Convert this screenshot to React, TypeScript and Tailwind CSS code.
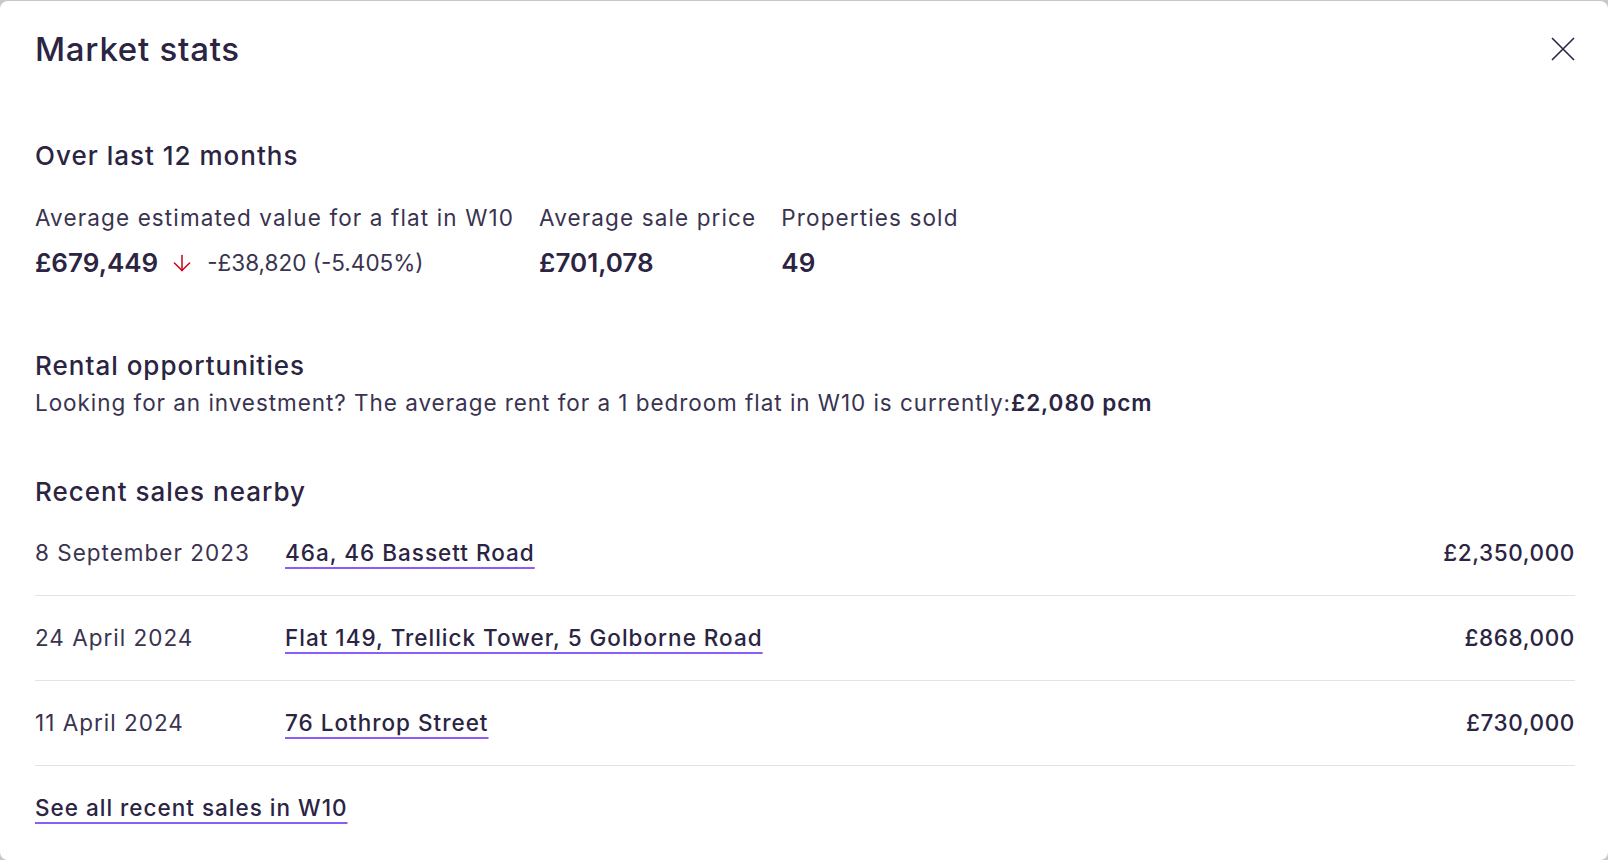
import React from "react";
import { ArrowDown } from "lucide-react";

interface Sale {
  date: string;
  address: string;
  price: string;
}

const sales: Sale[] = [
  { date: "8 September 2023", address: "46a, 46 Bassett Road", price: "£2,350,000" },
  { date: "24 April 2024", address: "Flat 149, Trellick Tower, 5 Golborne Road", price: "£868,000" },
  { date: "11 April 2024", address: "76 Lothrop Street", price: "£730,000" },
];

const linkClass =
  "font-medium text-[#2b2442] underline decoration-[#8b5cf6] decoration-2 underline-offset-[6px]";

const App = () => {
  return (
    <div
      className="min-h-screen bg-[#c8c8cc] pt-px"
      style={{ fontFamily: "Inter, 'Noto Sans', sans-serif" }}
    >
      <div className="h-[859px] rounded-lg bg-white pr-[33px] pl-[35px] pt-[30px] text-[#2b2442]">
        {/* Header */}
        <div className="flex items-center justify-between">
          <h1 className="text-[33px] leading-9 font-medium tracking-[0.75px]">Market stats</h1>
          <button className="text-[#2b2442]">
            <svg width="24" height="24" viewBox="0 0 24 24" fill="none">
              <path d="M1 1L23 23M23 1L1 23" stroke="currentColor" strokeWidth="1.6" />
            </svg>
          </button>
        </div>

        {/* Over last 12 months */}
        <h2 className="mt-[73px] text-[26px] leading-8 font-medium tracking-[1px]">Over last 12 months</h2>
        <div className="mt-[32px] flex gap-[25px]">
          <div>
            <p className="text-[22.5px] leading-7 tracking-[1.12px] text-[#3a3350]">
              Average estimated value for a flat in W10
            </p>
            <div className="mt-[15px] flex items-center">
              <span className="text-[26px] leading-8 font-semibold">£679,449</span>
              <ArrowDown className="ml-[11px] h-[26px] w-[26px] text-[#d0021b]" strokeWidth={1.4} />
              <span className="ml-3 text-[22.5px] leading-7 text-[#3a3350]">-£38,820 (-5.405%)</span>
            </div>
          </div>
          <div>
            <p className="text-[22.5px] leading-7 tracking-[1.12px] text-[#3a3350]">Average sale price</p>
            <p className="mt-[15px] text-[26px] leading-8 font-semibold">£701,078</p>
          </div>
          <div>
            <p className="text-[22.5px] leading-7 tracking-[1.12px] text-[#3a3350]">Properties sold</p>
            <p className="mt-[15px] text-[26px] leading-8 font-semibold">49</p>
          </div>
        </div>

        {/* Rental opportunities */}
        <h2 className="mt-[71px] text-[26px] leading-8 font-medium tracking-[1px]">Rental opportunities</h2>
        <p className="mt-[7px] text-[22.5px] leading-7 tracking-[0.95px] text-[#3a3350]">
          Looking for an investment? The average rent for a 1 bedroom flat in W10 is currently:
          <span className="font-semibold text-[#2b2442]">£2,080 pcm</span>
        </p>

        {/* Recent sales */}
        <h2 className="mt-[59px] text-[26px] leading-8 font-medium tracking-[1px]">Recent sales nearby</h2>
        <div className="mt-[3px]">
          {sales.map((s) => (
            <div
              key={s.address}
              className="flex items-center border-b border-[#e3e2e8] py-[28px] text-[22.5px] leading-7 tracking-[1px]"
            >
              <span className="w-[250px] text-[#3a3350]">{s.date}</span>
              <a href="#" className={linkClass}>
                {s.address}
              </a>
              <span className="ml-auto font-medium tracking-[0.6px]">{s.price}</span>
            </div>
          ))}
        </div>
        <div className="mt-[28px] text-[22.5px] leading-7 tracking-[1px]">
          <a href="#" className={linkClass}>
            See all recent sales in W10
          </a>
        </div>
      </div>
    </div>
  );
};

export default App;
